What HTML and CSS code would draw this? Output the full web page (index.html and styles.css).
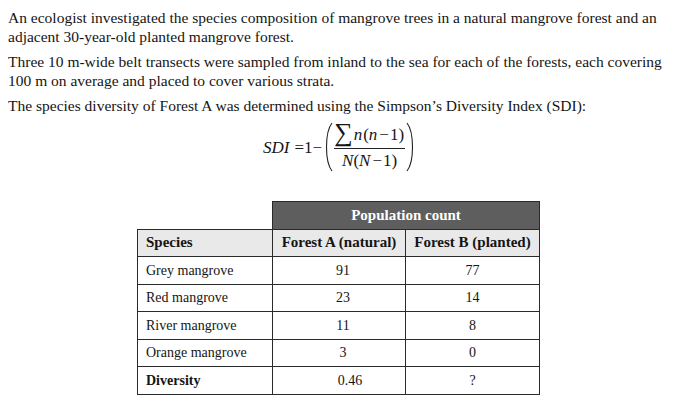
FILE: index.html
```html
<!DOCTYPE html>
<html>
<head>
<meta charset="utf-8">
<link rel="stylesheet" href="styles.css">
</head>
<body>
<p class="para">An ecologist investigated the species composition of mangrove trees in a natural mangrove forest and an adjacent 30-year-old planted mangrove forest.</p>
<p class="para">Three 10 m-wide belt transects were sampled from inland to the sea for each of the forests, each covering 100 m on average and placed to cover various strata.</p>
<p class="para">The species diversity of Forest A was determined using the Simpson’s Diversity Index (SDI):</p>
<div class="formula">
  <span class="var">SDI</span><span class="op">=1−</span>
  <svg class="paren" width="8" height="50" viewBox="0 0 8 50"><path d="M7 1 Q1.5 8 1.5 25 Q1.5 42 7 49" fill="none" stroke="#222" stroke-width="1.1"/></svg>
  <span class="frac">
    <span class="num"><span class="sigma">∑</span><span class="var">n</span><span class="gap">(</span><span class="var">n</span><span class="mi">−</span>1)</span>
    <span class="den"><span class="var">N</span>(<span class="var">N</span><span class="mi">−</span>1)</span>
  </span>
  <svg class="paren" width="8" height="50" viewBox="0 0 8 50"><path d="M1 1 Q6.5 8 6.5 25 Q6.5 42 1 49" fill="none" stroke="#222" stroke-width="1.1"/></svg>
</div>
<table class="data">
  <colgroup><col class="c1"><col class="c2"><col class="c3"></colgroup>
  <tr class="top">
    <td class="blank"></td>
    <th class="pop" colspan="2">Population count</th>
  </tr>
  <tr class="sub">
    <th class="left">Species</th>
    <th>Forest A (natural)</th>
    <th>Forest B (planted)</th>
  </tr>
  <tr><td class="left">Grey mangrove</td><td class="va">91</td><td>77</td></tr>
  <tr><td class="left">Red mangrove</td><td class="va">23</td><td>14</td></tr>
  <tr><td class="left">River mangrove</td><td class="va">11</td><td>8</td></tr>
  <tr><td class="left">Orange mangrove</td><td class="va">3</td><td>0</td></tr>
  <tr><th class="left">Diversity</th><td class="vd">0.46</td><td>?</td></tr>
</table>
</body>
</html>
```
FILE: styles.css
```css
body {
  margin: 8px;
  font-family: "Liberation Serif", "Times New Roman", serif;
  font-size: 15.5px;
  line-height: 19px;
  color: #151515;
  background: #fff;
}
.para {
  margin: 0 0 6px 0;
}
.formula {
  display: flex;
  align-items: center;
  margin: 0 0 0 255px;
  height: 52px;
  font-size: 17px;
}
.var {
  font-style: italic;
}
.op {
  margin: 0 3px 0 5px;
}
.paren {
  display: block;
}
.frac {
  display: flex;
  flex-direction: column;
  align-items: center;
  margin: 0 1px;
}
.num {
  border-bottom: 1px solid #222;
  padding: 0 1px 3px 0;
  display: flex;
  align-items: center;
}
.sigma {
  font-size: 26px;
  line-height: 20px;
  margin-right: 1px;
  position: relative;
  top: -2px;
}
.gap {
  margin-left: 1px;
}
.mi {
  margin: 0 1px 0 2px;
}
.den {
  padding-top: 2px;
}
.data {
  border-collapse: collapse;
  margin: 28px 0 0 129px;
  font-size: 14px;
  table-layout: fixed;
  width: 402px;
}
.c1 { width: 135px; }
.c2 { width: 133px; }
.c3 { width: 134px; }
.data td, .data th {
  border: 1px solid #2a2a2a;
  height: 26.5px;
  padding: 0;
  text-align: center;
}
.data th {
  font-weight: bold;
}
.data .left {
  text-align: left;
  padding-left: 8px;
}
.data td.va {
  padding-left: 8px;
}
.data td.vd {
  padding-left: 22px;
}
.data td.blank {
  border: none;
  border-right: 1px solid #2a2a2a;
}
.data th.pop {
  background: #5e5e5e;
  color: #fff;
  font-size: 15px;
}
.sub th {
  background: #e9e9e9;
  font-size: 15px;
}
```
